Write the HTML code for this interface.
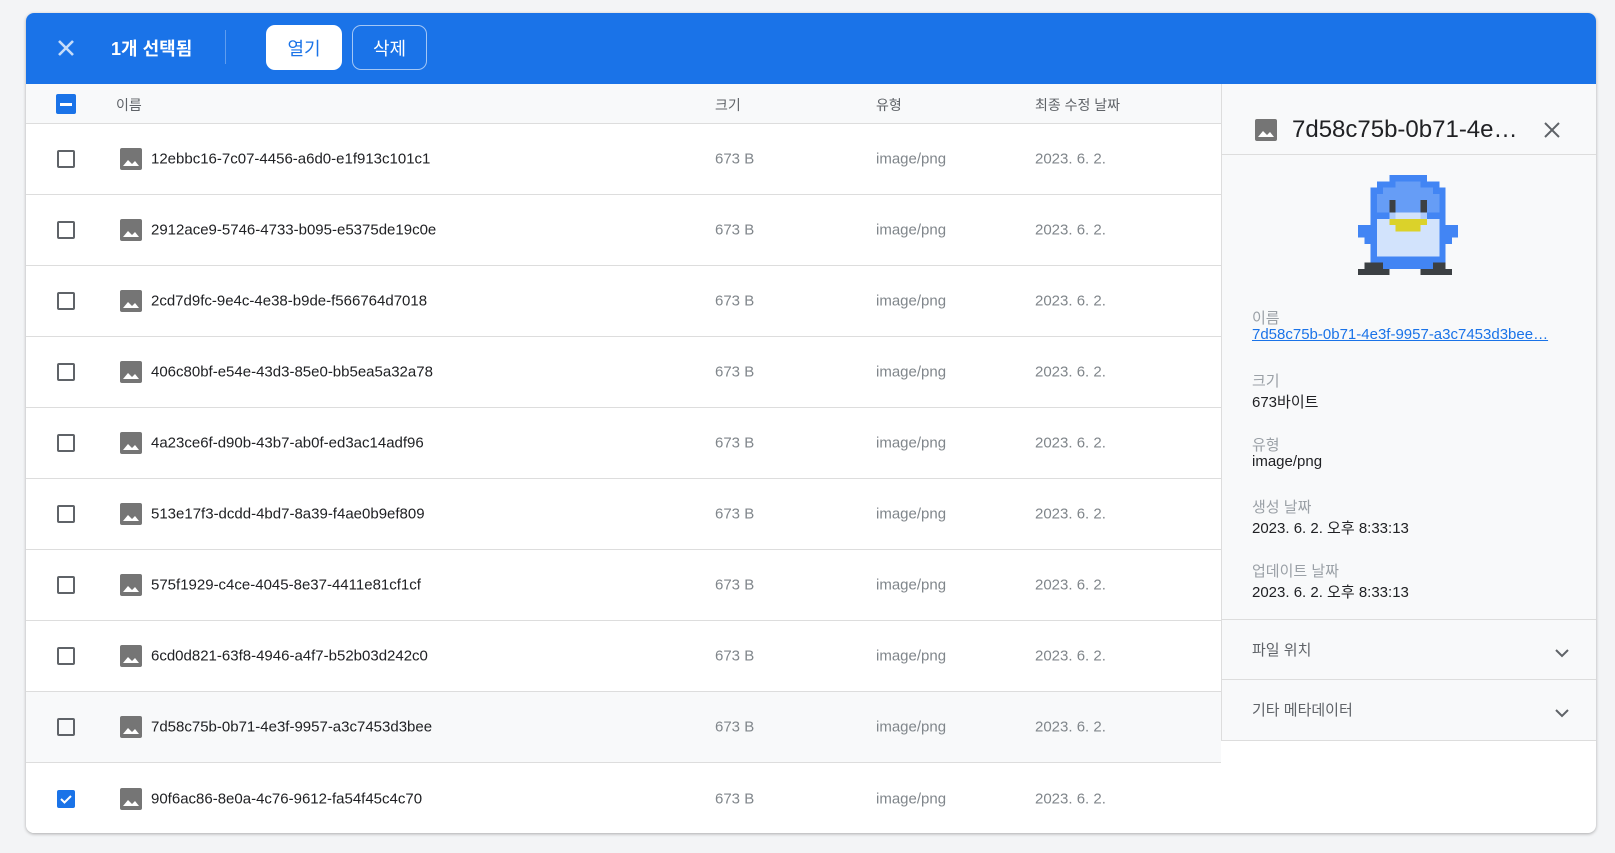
<!DOCTYPE html>
<html><head><meta charset="utf-8"><style>
*{box-sizing:border-box;margin:0;padding:0}
body{width:1615px;height:853px;background:#f3f4f6;font-family:"Liberation Sans","Noto Sans CJK KR",sans-serif;position:relative;overflow:hidden}
.card{position:absolute;left:26px;top:13px;width:1570px;height:820px;background:#fff;border-radius:8px;overflow:hidden;box-shadow:0 1px 3px rgba(0,0,0,.3)}
.bar{position:absolute;left:0;top:0;width:100%;height:71px;background:#1a73e8}
.abs{position:absolute}
.btn{position:absolute;top:12px;height:45px;border-radius:9px;font-size:18px;display:flex;align-items:center;justify-content:center}
.hdr{position:absolute;left:0;top:71px;width:1195px;height:40px;background:#f8f9fa;border-bottom:1px solid #ddd;font-size:14px;color:#5f6368}
.row{position:absolute;left:0;width:1195px;height:71px;border-bottom:1px solid #ddd;font-size:15px}
.row span{position:absolute;top:50%;transform:translateY(-50%)}
.cb{position:absolute;left:31px;top:50%;margin-top:-9px;width:18px;height:18px;border:2px solid #5f6368;border-radius:2px}
.ic{position:absolute;left:94px;top:50%;margin-top:-11px}
.nm{left:125px;color:#202124}
.g{color:#80868b}
.panel{position:absolute;left:1195px;top:71px;width:375px;height:657px;background:#f8f9fa;border-left:1px solid #ddd;border-bottom:1px solid #ddd}
.lab{position:absolute;left:30px;font-size:15px;color:#9aa0a6}
.val{position:absolute;left:30px;font-size:15px;color:#202124}
.sec{position:absolute;left:0;width:100%;border-top:1px solid #ddd}
</style></head><body>
<div class="card">
 <div class="bar">
  <svg class="abs" style="left:31px;top:26px" width="18" height="18" viewBox="0 0 18 18"><path d="M2 2L16 16M16 2L2 16" stroke="rgba(255,255,255,.75)" stroke-width="2.6"/></svg>
  <div class="abs" style="left:85px;top:22px;color:#fff;font-size:18px;font-weight:bold">1개 선택됨</div>
  <div class="abs" style="left:199px;top:17px;width:1px;height:34px;background:rgba(255,255,255,.3)"></div>
  <div class="btn" style="left:240px;width:76px;background:#fff;color:#1a73e8">열기</div>
  <div class="btn" style="left:326px;width:75px;border:1px solid rgba(255,255,255,.6);color:#fff">삭제</div>
 </div>
 <div class="hdr">
  <div class="abs" style="left:30px;top:10px;width:20px;height:20px;background:#1a73e8;border-radius:2px"><div style="position:absolute;left:4px;top:9px;width:12px;height:2.5px;background:#fff"></div></div>
  <span class="abs" style="left:90px;top:11px">이름</span>
  <span class="abs" style="left:689px;top:11px">크기</span>
  <span class="abs" style="left:850px;top:11px">유형</span>
  <span class="abs" style="left:1009px;top:11px">최종 수정 날짜</span>
 </div>
 <div id="rows"></div>
 <div class="panel">
  <svg class="abs" style="left:33px;top:35px" width="22" height="22" viewBox="0 0 22 22"><rect width="22" height="22" rx="2" fill="#757575"/><path d="M3 18l5-6 4 4 3-3 4 5z" fill="#fff"/></svg>
  <div class="abs" style="left:70px;top:32px;font-size:24px;color:#202124">7d58c75b-0b71-4e…</div>
  <svg class="abs" style="left:321px;top:37px" width="18" height="18" viewBox="0 0 18 18"><path d="M2 2L16 16M16 2L2 16" stroke="#5f6368" stroke-width="2"/></svg>
  <div class="sec" style="top:70px"></div>
  <svg class="abs" style="left:136px;top:91px" width="100" height="100" viewBox="0 0 16 16" shape-rendering="crispEdges">
   <g fill="#4285f4">
    <rect x="5" y="0" width="6" height="1"/><rect x="3" y="1" width="10" height="1"/><rect x="2" y="2" width="12" height="12"/>
    <rect x="0" y="8" width="16" height="2"/><rect x="1" y="10" width="14" height="1"/><rect x="4" y="14" width="8" height="1"/>
   </g>
   <g fill="#669df6"><rect x="6" y="1" width="4" height="1"/><rect x="4" y="2" width="8" height="4"/><rect x="3" y="3" width="10" height="3"/></g>
   <g fill="#d2e3fc"><rect x="6" y="6" width="4" height="1"/><rect x="3" y="7" width="10" height="6"/></g>
   <g fill="#aecbfa"><rect x="5" y="5" width="1" height="2"/><rect x="10" y="5" width="1" height="2"/></g>
   <g fill="#3c4043"><rect x="5" y="4" width="1" height="2"/><rect x="10" y="4" width="1" height="2"/>
    <rect x="1" y="14" width="3" height="1"/><rect x="12" y="14" width="2" height="1"/><rect x="0" y="15" width="5" height="1"/><rect x="10" y="15" width="5" height="1"/></g>
   <g fill="#dbd22a"><rect x="5" y="7" width="6" height="1"/><rect x="6" y="8" width="4" height="1"/></g>
  </svg>
  <div class="lab" style="top:223px">이름</div>
  <div class="val" style="top:242px;color:#1a73e8;text-decoration:underline">7d58c75b-0b71-4e3f-9957-a3c7453d3bee…</div>
  <div class="lab" style="top:286px">크기</div>
  <div class="val" style="top:307px">673바이트</div>
  <div class="lab" style="top:350px">유형</div>
  <div class="val" style="top:369px">image/png</div>
  <div class="lab" style="top:412px">생성 날짜</div>
  <div class="val" style="top:433px">2023. 6. 2. 오후 8:33:13</div>
  <div class="lab" style="top:476px">업데이트 날짜</div>
  <div class="val" style="top:497px">2023. 6. 2. 오후 8:33:13</div>
  <div class="sec" style="top:535px"></div>
  <div class="lab" style="top:555px;color:#5f6368">파일 위치</div>
  <svg class="abs" style="left:333px;top:564px" width="14" height="10" viewBox="0 0 14 10"><path d="M1 2l6 6 6-6" stroke="#5f6368" stroke-width="2" fill="none"/></svg>
  <div class="sec" style="top:595px"></div>
  <div class="lab" style="top:615px;color:#5f6368">기타 메타데이터</div>
  <svg class="abs" style="left:333px;top:624px" width="14" height="10" viewBox="0 0 14 10"><path d="M1 2l6 6 6-6" stroke="#5f6368" stroke-width="2" fill="none"/></svg>
 </div>
</div>
<script>
var n=["12ebbc16-7c07-4456-a6d0-e1f913c101c1","2912ace9-5746-4733-b095-e5375de19c0e","2cd7d9fc-9e4c-4e38-b9de-f566764d7018","406c80bf-e54e-43d3-85e0-bb5ea5a32a78","4a23ce6f-d90b-43b7-ab0f-ed3ac14adf96","513e17f3-dcdd-4bd7-8a39-f4ae0b9ef809","575f1929-c4ce-4045-8e37-4411e81cf1cf","6cd0d821-63f8-4946-a4f7-b52b03d242c0","7d58c75b-0b71-4e3f-9957-a3c7453d3bee","90f6ac86-8e0a-4c76-9612-fa54f45c4c70"];
var h="";
for(var i=0;i<10;i++){
var bg=i==8?"#f8f9fa":"#fff";
var cb=i==9?'<div class="cb" style="background:#1a73e8;border-color:#1a73e8"><svg width="14" height="14" viewBox="0 0 14 14" style="position:absolute;left:0;top:0"><path d="M2 7l3.5 3.5L12 4" stroke="#fff" stroke-width="2" fill="none"/></svg></div>':'<div class="cb"></div>';
h+='<div class="row" style="top:'+(111+71*i)+'px;background:'+bg+(i==9?';border-bottom:none':'')+'">'+cb+
'<svg class="ic" width="22" height="22" viewBox="0 0 22 22"><rect width="22" height="22" rx="2" fill="#757575"/><path d="M3 18l5-6 4 4 3-3 4 5z" fill="#fff"/></svg>'+
'<span class="nm">'+n[i]+'</span><span class="g" style="left:689px">673 B</span><span class="g" style="left:850px">image/png</span><span class="g" style="left:1009px">2023. 6. 2.</span></div>';}
document.getElementById("rows").innerHTML=h;
</script>
</body></html>
